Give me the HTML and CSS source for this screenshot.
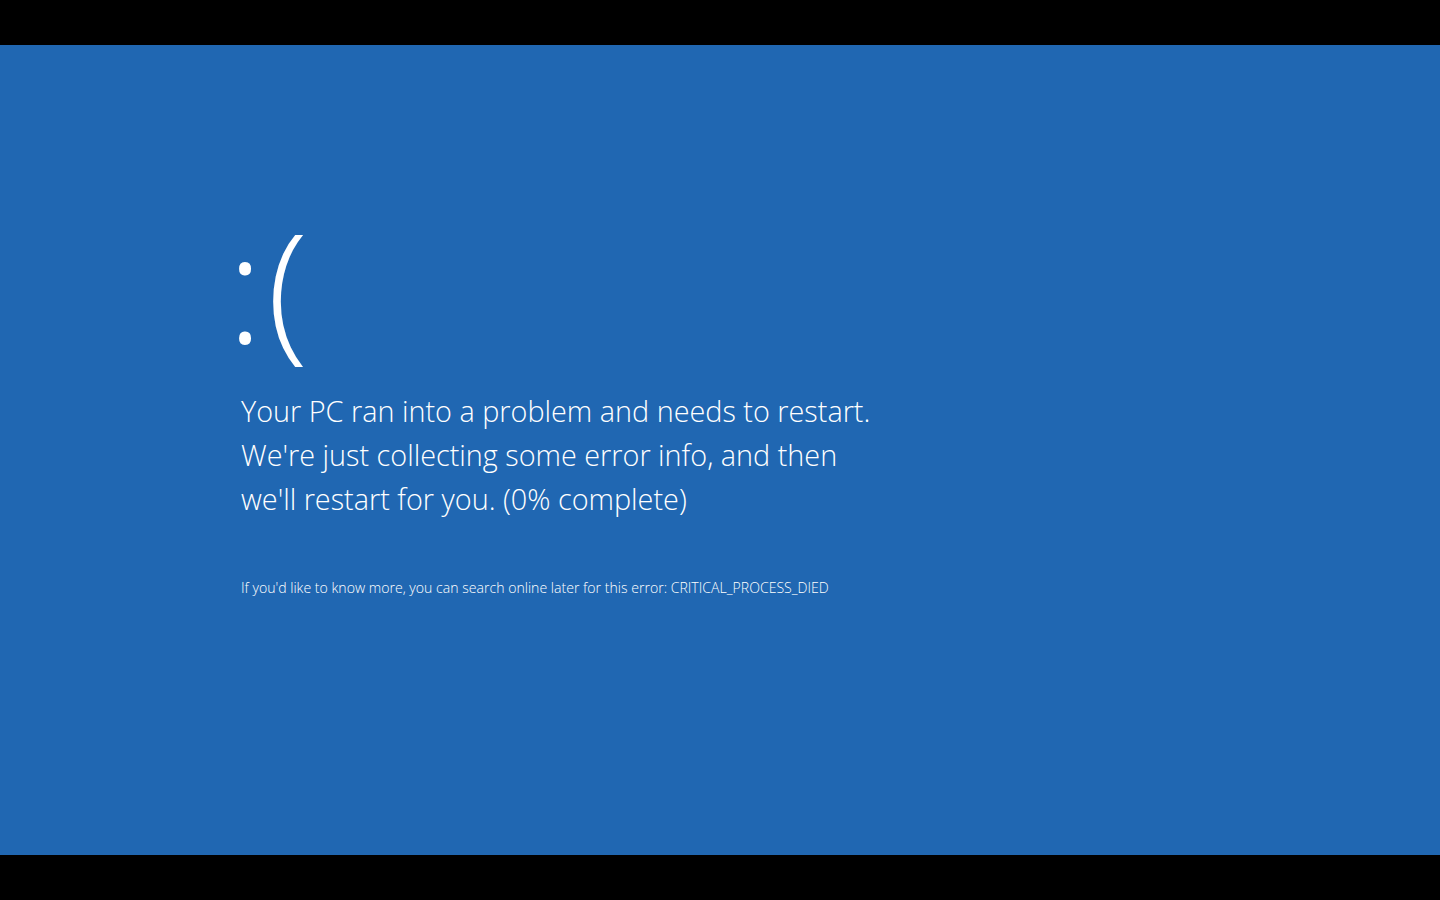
FILE: index.html
```html
<!DOCTYPE html>
<html lang="en">
<head>
<meta charset="utf-8">
<title>Blue screen</title>
<link rel="stylesheet" href="styles.css">
</head>
<body>
<div class="screen">
  <div class="bar"></div>
  <main class="bsod">
    <div class="content">
      <div class="face">:(</div>
      <p class="message">Your PC ran into a problem and needs to restart.<br>We're just collecting some error info, and then<br>we'll restart for you. (0% complete)</p>
      <p class="details">If you'd like to know more, you can search online later for this error: CRITICAL_PROCESS_DIED</p>
    </div>
  </main>
  <div class="bar"></div>
</div>
</body>
</html>
```

FILE: styles.css
```css
html, body {
  margin: 0;
  padding: 0;
  background: #000;
}
.screen {
  width: 1440px;
  height: 900px;
  display: flex;
  flex-direction: column;
}
.bar {
  height: 45px;
  background: #000;
  flex: none;
}
.bsod {
  flex: 1;
  background: #2067b2;
  color: #fff;
  font-family: "Open Sans", "Noto Sans", sans-serif;
  font-weight: 300;
}
.content {
  padding: 155px 0 0 241px;
}
.face {
  margin-left: -14px;
  font-size: 151px;
  line-height: 170px;
  height: 170px;
  letter-spacing: 4px;
}
.message {
  margin: 19px 0 0 0;
  font-size: 28.8px;
  line-height: 44px;
}
.details {
  margin: 57px 0 0 0;
  font-size: 14.1px;
  line-height: 20px;
}
```
